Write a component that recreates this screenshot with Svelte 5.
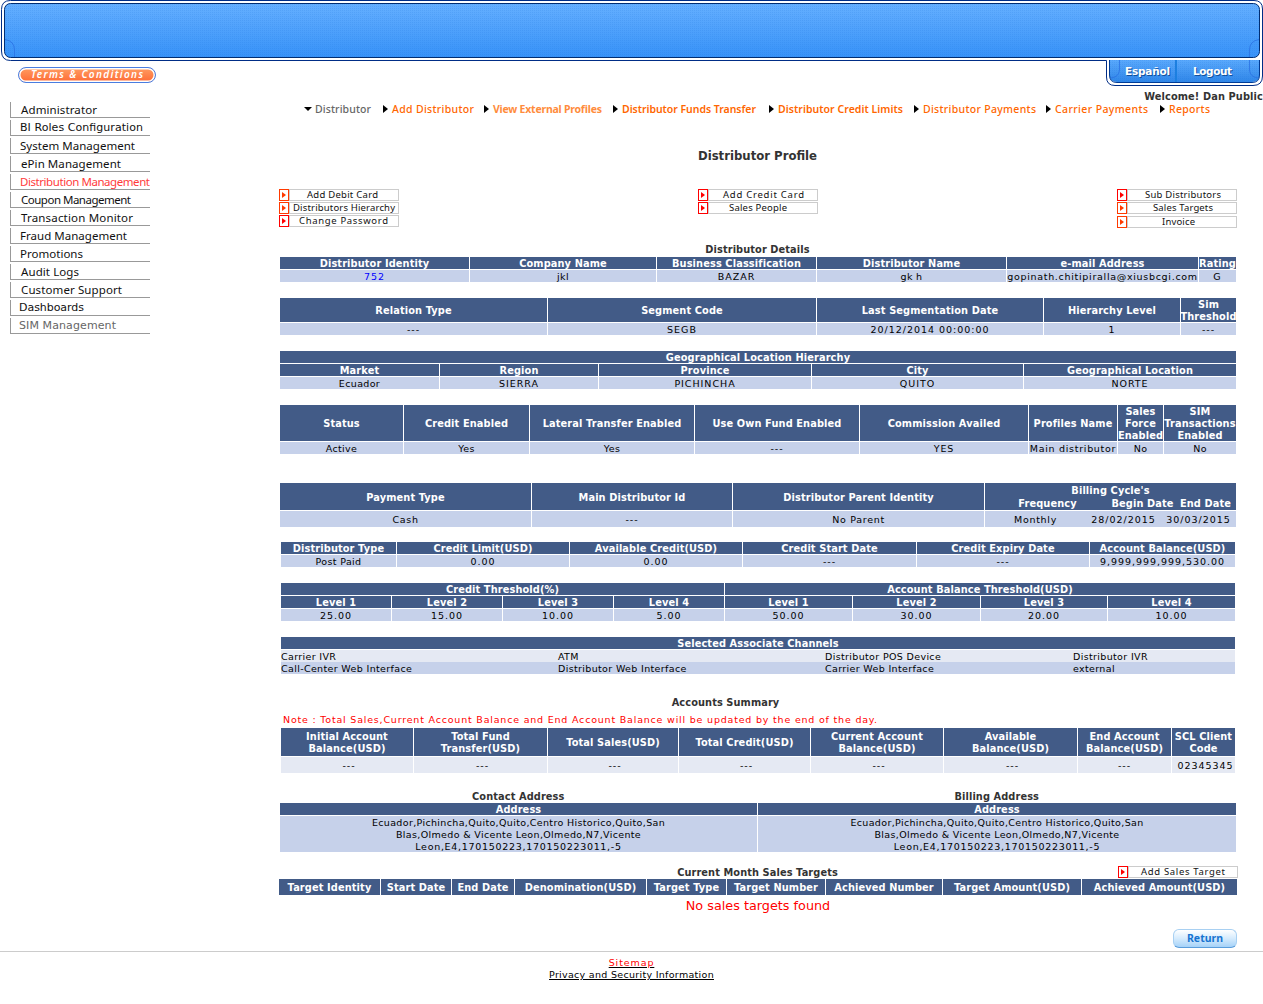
<script>
  const menu = [
    ['Administrator', 76, 'noto', 10],
    ['BI Roles Configuration', 123, 'dejavu', 9],
    ['System Management', 115, 'noto', 9],
    ['ePin Management', 100, 'noto', 10],
    ['Distribution Management', 130, 'noto active', 9],
    ['Coupon Management', 110, 'noto', 10],
    ['Transaction Monitor', 112, 'noto', 10],
    ['Fraud Management', 107, 'noto', 9],
    ['Promotions', 63, 'noto', 9],
    ['Audit Logs', 58, 'noto', 10],
    ['Customer Support', 101, 'noto', 10],
    ['Dashboards', 65, 'dejavu', 8],
    ['SIM Management', 97, 'dejavu dim', 8]
  ];

  const nav = [
    ['Distributor', 56, 12, 'current'],
    ['Add Distributor', 82, 10, ''],
    ['View External Profiles', 109, 11, 'heavy'],
    ['Distributor Funds Transfer', 134, 13, 'semi'],
    ['Distributor Credit Limits', 125, 11, 'semi'],
    ['Distributor Payments', 113, 10, ''],
    ['Carrier Payments', 93, 12, ''],
    ['Reports', 41, 0, '']
  ];

  const actions = [
    [['Add Debit Card', 71, 'warm', 17], ['Distributors Hierarchy', 102, 'warm', 3], ['Change Password', 89, '', 9]],
    [['Add Credit Card', 81, '', 14], ['Sales People', 58, '', 20]],
    [['Sub Distributors', 76, '', 17], ['Sales Targets', 60, 'warm', 25], ['Invoice', 33, 'warm drop', 34]]
  ];

  const details = [
    { kind: 'head', h: 12, cols: [189, 186, 159, 189, 191, 37], cells: ['Distributor Identity', 'Company Name', 'Business Classification', 'Distributor Name', 'e-mail Address', 'Rating'] },
    { kind: 'data', h: 12, cols: [189, 186, 159, 189, 191, 37], cells: ['752', 'jkl', 'BAZAR', 'gk h', 'gopinath.chitipiralla@xiusbcgi.com', 'G'], link: 0 }
  ];
  const segment = [
    { kind: 'head', h: 24, cols: [267, 268, 226, 136, 55], cells: ['Relation Type', 'Segment Code', 'Last Segmentation Date', 'Hierarchy Level', 'Sim\nThreshold'] },
    { kind: 'data', h: 12, cols: [267, 268, 226, 136, 55], cells: ['---', 'SEGB', '20/12/2014 00:00:00', '1', '---'] }
  ];
  const location = [
    { kind: 'head', h: 12, cols: [956], cells: ['Geographical Location Hierarchy'] },
    { kind: 'head', h: 12, cols: [159, 158, 212, 211, 212], cells: ['Market', 'Region', 'Province', 'City', 'Geographical Location'] },
    { kind: 'data', h: 12, cols: [159, 158, 212, 211, 212], cells: ['Ecuador', 'SIERRA', 'PICHINCHA', 'QUITO', 'NORTE'] }
  ];
  const status = [
    { kind: 'head', h: 36, cols: [123, 125, 164, 164, 168, 88, 45, 72], cells: ['Status', 'Credit Enabled', 'Lateral Transfer Enabled', 'Use Own Fund Enabled', 'Commission Availed', 'Profiles Name', 'Sales\nForce\nEnabled', 'SIM\nTransactions\nEnabled'] },
    { kind: 'data', h: 12, cols: [123, 125, 164, 164, 168, 88, 45, 72], cells: ['Active', 'Yes', 'Yes', '---', 'YES', 'Main distributor', 'No', 'No'] }
  ];
  const credit = [
    { kind: 'head', h: 12, cols: [115, 172, 172, 173, 172, 145], cells: ['Distributor Type', 'Credit Limit(USD)', 'Available Credit(USD)', 'Credit Start Date', 'Credit Expiry Date', 'Account Balance(USD)'] },
    { kind: 'data', h: 12, cols: [115, 172, 172, 173, 172, 145], cells: ['Post Paid', '0.00', '0.00', '---', '---', '9,999,999,999,530.00'] }
  ];
  const levels = [110, 110, 110, 110, 127, 127, 126, 127];
  const threshold = [
    { kind: 'head', h: 12, cols: [443, 510], cells: ['Credit Threshold(%)', 'Account Balance Threshold(USD)'] },
    { kind: 'head', h: 12, cols: levels, cells: ['Level 1', 'Level 2', 'Level 3', 'Level 4', 'Level 1', 'Level 2', 'Level 3', 'Level 4'] },
    { kind: 'data', h: 12, cols: levels, cells: ['25.00', '15.00', '10.00', '5.00', '50.00', '30.00', '20.00', '10.00'] }
  ];
  const channels = [
    ['Carrier IVR', 'ATM', 'Distributor POS Device', 'Distributor IVR'],
    ['Call-Center Web Interface', 'Distributor Web Interface', 'Carrier Web Interface', 'external']
  ];
  const summary = [
    { kind: 'head', h: 28, cols: [132, 133, 130, 131, 132, 133, 93, 63], cells: ['Initial Account\nBalance(USD)', 'Total Fund\nTransfer(USD)', 'Total Sales(USD)', 'Total Credit(USD)', 'Current Account\nBalance(USD)', 'Available\nBalance(USD)', 'End Account\nBalance(USD)', 'SCL Client\nCode'] },
    { kind: 'data pale', h: 16, cols: [132, 133, 130, 131, 132, 133, 93, 63], cells: [' ---', ' ---', ' ---', ' ---', ' ---', ' ---', '---', ' 02345345'] }
  ];
  const place = 'Ecuador,Pichincha,Quito,Quito,Centro Historico,Quito,San\nBlas,Olmedo & Vicente Leon,Olmedo,N7,Vicente\nLeon,E4,170150223,170150223011,-5';
  const address = [
    { kind: 'head', h: 12, cols: [477, 478], cells: ['Address', 'Address'] },
    { kind: 'data', h: 36, cols: [477, 478], cells: [place, place] }
  ];
  const targets = [
    { kind: 'head', h: 16, cols: [101, 70, 62, 131, 79, 98, 116, 138, 155], cells: ['Target Identity', 'Start Date', 'End Date', 'Denomination(USD)', 'Target Type', 'Target Number', 'Achieved Number', 'Target Amount(USD)', 'Achieved Amount(USD)'] }
  ];

  const tracks = (cols) => cols.map((c) => c + 'px').join(' ');

  const tracking = (line) => {
    if (!/[a-z]/.test(line)) return 'loose';
    if (/@|\d{5}|^Main/.test(line)) return 'medium';
    return '';
  };
</script>

{#snippet label(text, width, cls)}
  <svg class="label {cls}" {width} height="12"><text x="0" y="10" textLength={width}>{text}</text></svg>
{/snippet}

{#snippet action(text, width, cls, indent)}
  <div class="action {cls}">
    <svg class="bullet" width="10" height="12"><rect x=".5" y=".5" width="9" height="11" /><path d="M3 3v6l4-3z" /></svg>
    <span class="face" style="padding-left: {indent}px">{@render label(text, width, 'noto')}</span>
  </div>
{/snippet}

{#snippet table(rows, cls)}
  <div class="table {cls}">
    {#each rows as row}
      <div class="row {row.kind}" style="grid-template-columns: {tracks(row.cols)}; height: {row.h}px">
        {#each row.cells as cell, i}
          <div class="cell" class:link={row.link === i}>
            {#each cell.split('\n') as line}<span class={tracking(line)}>{line}</span>{/each}
          </div>
        {/each}
      </div>
    {/each}
  </div>
{/snippet}

<div class="page">
  <header>
    <svg class="banner" width="1263" height="87">
      <defs>
        <linearGradient id="sky" x1="0" y1="0" x2="0" y2="1">
          <stop offset="0" stop-color="#65afff" /><stop offset="1" stop-color="#3792f8" />
        </linearGradient>
        <linearGradient id="tab" x1="0" y1="0" x2="0" y2="1">
          <stop offset="0" stop-color="#5aa9fc" /><stop offset="1" stop-color="#2f86e8" />
        </linearGradient>
        <pattern id="dots" width="2" height="2" patternUnits="userSpaceOnUse">
          <rect width="1" height="1" fill="#1c6fd8" opacity=".16" />
        </pattern>
      </defs>
      <path d="M10.500 .5H1254Q1262.500 .5 1262.500 9V76Q1262.500 85.500 1253 85.500H1115Q1106.500 85.500 1106.500 77V60.500H10.500Q1.500 60.500 1.500 51V9.500Q1.500 .5 10.500 .5Z" fill="#fff" stroke="#002d86" />
      <rect x="4.500" y="3.500" width="1255" height="54" rx="6" fill="url(#sky)" stroke="#002d72" />
      <rect x="5" y="4" width="1254" height="53" rx="6" fill="url(#dots)" />
      <path d="M1109.500 60H1259.500V75Q1259.500 82 1252 82H1117Q1109.500 82 1109.500 75Z" fill="url(#tab)" />
      <path d="M1109.500 60H1259.500V75Q1259.500 82 1252 82H1117Q1109.500 82 1109.500 75Z" fill="url(#dots)" />
      <path d="M1109.500 60V75Q1109.500 82.500 1117 82.500H1252Q1259.500 82.500 1259.500 75V60" fill="none" stroke="#003a93" />
      <path d="M5 39.500Q14.500 41 14.500 50V57M1259 39.500Q1249.500 41 1249.500 50V57M1249.500 60V70Q1250 77 1258 78M1119.500 60V70Q1119 77 1111 78" fill="none" stroke="#2b72e3" opacity=".8" />
      <path d="M1176 60V82" stroke="#1c7fe0" stroke-width="2" />
      <g class="tabs shade"><text x="1126" y="76" textLength="45">Español</text><text x="1194" y="76" textLength="39">Logout</text></g>
      <g class="tabs"><text x="1125" y="75" textLength="45">Español</text><text x="1193" y="75" textLength="39">Logout</text></g>
    </svg>
  </header>

  <div class="body">
    <aside>
      <div class="terms">{@render label('Terms & Conditions', 112, 'terms-text')}</div>
      <nav class="menu">
        {#each menu as [text, width, cls, indent]}
          <a class="item" style="padding-left: {indent}px">{@render label(text, width, cls)}</a>
        {/each}
      </nav>
    </aside>

    <main>
      <div class="welcome">Welcome! Dan Public</div>
      <nav class="crumbs">
        {#each nav as [text, width, gap, cls], i}
          {#if i === 0}
            <svg class="down" width="8" height="5"><path d="M0 0h8L4 4z" /></svg>
          {:else}
            <svg class="right" width="5" height="8"><path d="M0 0v8l5-4z" /></svg>
          {/if}
          <span class="crumb" style="margin-right: {gap}px">{@render label(text, width, 'open ' + cls)}</span>
        {/each}
      </nav>

      <h1>Distributor Profile</h1>

      <div class="actions">
        {#each actions as group}
          <div class="group">
            {#each group as [text, width, cls, indent]}{@render action(text, width, cls, indent)}{/each}
          </div>
        {/each}
      </div>

      <h2 class="first">Distributor Details</h2>
      {@render table(details, '')}
      {@render table(segment, 'gap16')}
      {@render table(location, 'gap16')}
      {@render table(status, 'gap16')}

      <div class="table payment">
        <div class="row head">
          <div class="cell">Payment Type</div>
          <div class="cell">Main Distributor Id</div>
          <div class="cell">Distributor Parent Identity</div>
          <div class="cell cycle">
            <span class="wide">Billing Cycle's</span><span>Frequency</span><span>Begin Date</span><span>End Date</span>
          </div>
        </div>
        <div class="row data">
          <div class="cell"><span class="medium">Cash</span></div>
          <div class="cell"><span class="loose">---</span></div>
          <div class="cell"><span class="medium">No Parent</span></div>
          <div class="cell cycle values"><span class="medium">Monthly</span><span class="loose">28/02/2015</span><span class="loose">30/03/2015</span></div>
        </div>
      </div>

      {@render table(credit, 'inset gap15')}
      {@render table(threshold, 'inset gap16')}

      <div class="table inset gap16 channels">
        <div class="row head"><div class="cell">Selected Associate Channels</div></div>
        <div>
          {#each channels as row}
            <div class="channel">{#each row as name}<span>{name}</span>{/each}</div>
          {/each}
        </div>
      </div>

      <h2 class="accounts">Accounts Summary</h2>
      <p class="note">Note : Total Sales,Current Account Balance and End Account Balance will be updated by the end of the day.</p>
      {@render table(summary, 'inset')}

      <div class="pair"><h2>Contact Address</h2><h2>Billing Address</h2></div>
      {@render table(address, '')}

      <div class="target-bar">
        <h2>Current Month Sales Targets</h2>
        {@render action('Add Sales Target', 84, '', 12)}
      </div>
      {@render table(targets, 'outset')}
      <p class="empty">No sales targets found</p>
      <button>{@render label('Return', 36, 'return')}</button>
    </main>
  </div>

  <footer>
    <a class="sitemap">Sitemap</a>
    <a>Privacy and Security Information</a>
  </footer>
</div>

<style>
  :global(body) { margin: 0; background: #fff; }
  .page { width: 1263px; height: 1004px; overflow: hidden; font: 9.500px/12px 'DejaVu Sans', Verdana, sans-serif; letter-spacing: .35px; color: #000; display: flex; flex-direction: column; }
  header { height: 61px; flex: none; }
  .banner { display: block; overflow: visible; letter-spacing: 0; }
  .tabs text { font: bold 10.500px 'DejaVu Sans', sans-serif; fill: #fff; }
  .tabs.shade text { fill: #11509c; }
  .body { display: flex; height: 890px; flex: none; }
  aside { width: 279px; flex: none; padding-top: 6px; box-sizing: border-box; }
  .label { display: block; overflow: visible; letter-spacing: 0; flex: none; }
  .noto text { font-family: 'Noto Sans', sans-serif; font-size: 9.500px; fill: #111; }
  .open text { font: 500 10.500px 'Noto Sans', sans-serif; fill: #f60; }
  .open.semi text { font-weight: 600; }
  .open.heavy text { font-weight: 700; fill: #ff8c3c; }
  .open.current text { fill: #666; }

  .terms { margin-left: 18px; width: 138px; height: 16px; box-sizing: border-box; border: 1px solid #4a7de0; border-radius: 8px; padding: 0 12px; background: linear-gradient(#ff9c62, #ff6b35) padding-box; box-shadow: inset 0 0 0 1.500px #fff; }
  .terms-text text { font: italic 600 10px 'Noto Sans', sans-serif; fill: #fff; }
  .menu { margin: 19px 0 0 10px; width: 140px; display: flex; flex-direction: column; gap: 2px; }
  .item { height: 16px; box-sizing: border-box; border-left: 1px solid #999; border-bottom: 1px solid #999; padding-top: 2px; }
  .item:has(.dejavu) { padding-top: 1px; }
  .menu .noto text { font-size: 11.500px; }
  .menu .active text { fill: #ff3b3b; }
  .menu .dejavu text { font: 11px 'DejaVu Sans', sans-serif; fill: #111; }
  .menu .dim text { fill: #666; }

  main { width: 984px; display: flex; flex-direction: column; align-items: flex-start; }
  .welcome { margin-top: 30px; align-self: flex-end; font-weight: bold; font-size: 9.800px; letter-spacing: .12px; color: #333; }
  .crumbs { display: flex; align-items: center; height: 12px; padding-left: 25px; }
  .crumb { display: block; }
  .down { margin-right: 3px; margin-top: 1px; }
  .right { margin-right: 4px; }
  h1 { margin: 33px 0 0; width: 957px; text-align: center; font: bold 11.700px/16px 'DejaVu Sans', sans-serif; letter-spacing: 0; color: #333; }
  .actions { margin-top: 25px; width: 958px; height: 40px; display: flex; justify-content: space-between; }
  .group { display: flex; flex-direction: column; gap: 1px; }
  .action { display: flex; height: 12px; }
  .action.drop { margin-top: 1px; }
  .bullet { fill: #f00; flex: none; }
  .bullet rect { fill: #fff; stroke: #f00; }
  .warm .bullet { fill: #ff3a00; }
  .warm .bullet rect { stroke: #ff3a00; }
  .face { width: 110px; height: 12px; box-sizing: border-box; border: 1px solid #ccc; }
  .face .label { margin-top: -2px; }
  h2 { margin: 0; width: 957px; font: bold 9.800px/12px 'DejaVu Sans', sans-serif; letter-spacing: .1px; color: #333; text-align: center; }
  h2.first { margin: 15px 0 1px; }

  .table { width: 956px; margin-left: 1px; display: flex; flex-direction: column; gap: 1px; }
  .table.inset { width: 954px; margin-left: 2px; }
  .table.outset { width: 958px; margin-left: 0; }
  .gap16 { margin-top: 16px; }
  .gap15 { margin-top: 15px; }
  .row { display: grid; gap: 1px; }
  .cell { display: flex; flex-direction: column; align-items: center; justify-content: center; text-align: center; white-space: pre; min-width: 0; min-height: 0; box-sizing: border-box; padding-top: 2px; }
  .head .cell { background: #425b87; color: #fff; font-weight: bold; font-size: 9.800px; letter-spacing: .12px; }
  .data .cell { background: #c6d1ea; }
  .data.pale .cell { background: #e5e9f3; }
  .data .loose { letter-spacing: .97px; }
  .data .medium { letter-spacing: .7px; }
  .cell.link { color: #00f; }

  .payment { margin-top: 29px; }
  .payment .row { grid-template-columns: 251px 200px 251px 251px; }
  .payment .head { height: 27px; }
  .payment .data { height: 16px; }
  .cell.cycle { display: grid; grid-template-columns: 125px 65px 61px; align-content: center; align-items: stretch; justify-content: start; row-gap: 1px; justify-items: center; }
  .cycle .wide { grid-column: 1 / 4; }
  .cell.cycle.values { grid-template-columns: 101px 75px 75px; }

  .channels .row { height: 12px; }
  .channel { display: grid; grid-template-columns: 277px 267px 248px 1fr; height: 12px; background: #c6d1ea; line-height: 14px; }
  .channel:first-child { background: #e5e9f3; }

  .accounts { margin-top: 23px; width: 893px; }
  .note { margin: 5px 0 2px 4px; color: #f00; white-space: nowrap; letter-spacing: .8px; }
  .pair { display: flex; margin-top: 18px; width: 957px; }
  .pair h2 { width: 479px; }
  .target-bar { margin-top: 14px; width: 959px; height: 13px; display: grid; grid-template-columns: 839px 120px; }
  .target-bar h2 { width: 957px; line-height: 14px; }
  .empty { margin: 3px 0 0; width: 958px; text-align: center; color: #f00; font-size: 12.800px; line-height: 16px; letter-spacing: 0; }
  button { margin: 15px 0 0 894px; width: 64px; height: 19px; padding: 0 0 2px 13px; border: 1px solid #a8d0f2; border-bottom-color: #5a9ddb; border-radius: 6px; background: linear-gradient(#fff, #d5ebfd 50%, #a5d2f8); box-sizing: border-box; }
  .return text { font: bold 10.500px 'Noto Sans', sans-serif; fill: #1674d1; }
  footer { border-top: 1px solid #ccc; padding-top: 5px; display: flex; flex-direction: column; align-items: center; text-decoration: underline; letter-spacing: .3px; }
  .sitemap { color: #f00; letter-spacing: .9px; }
</style>
